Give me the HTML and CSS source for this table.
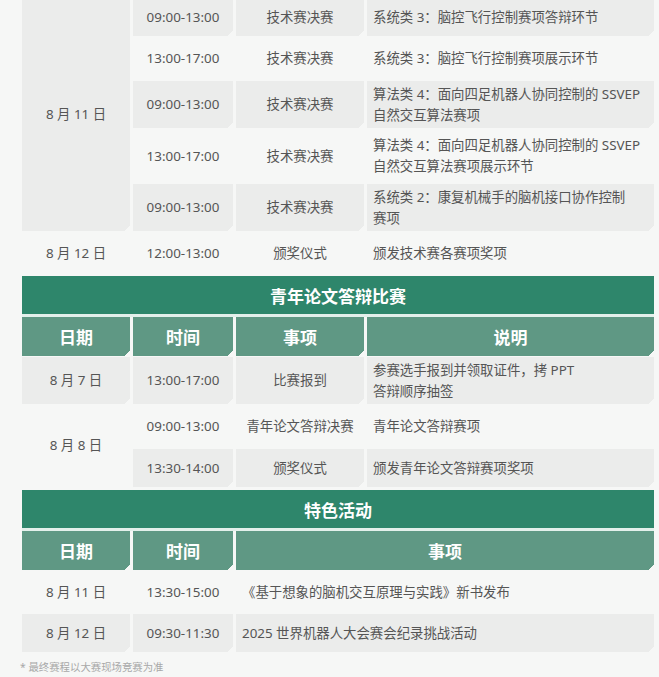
FILE: index.html
```html
<!DOCTYPE html>
<html lang="zh">
<head>
<meta charset="utf-8">
<title>赛程安排</title>
<link rel="stylesheet" href="styles.css">
</head>
<body>
<div class="page">
  <table class="sched first">
    <colgroup><col class="c-date"><col class="c-time"><col class="c-item"><col class="c-desc"></colgroup>
    <tbody>
      <tr class="g1">
        <td class="gray" rowspan="5">8 月 11 日</td>
        <td class="gray">09:00-13:00</td>
        <td class="gray">技术赛决赛</td>
        <td class="gray desc">系统类 3：脑控飞行控制赛项答辩环节</td>
      </tr>
      <tr class="w1">
        <td>13:00-17:00</td>
        <td>技术赛决赛</td>
        <td class="desc">系统类 3：脑控飞行控制赛项展示环节</td>
      </tr>
      <tr class="g2">
        <td class="gray">09:00-13:00</td>
        <td class="gray">技术赛决赛</td>
        <td class="gray desc">算法类 4：面向四足机器人协同控制的 SSVEP<br>自然交互算法赛项</td>
      </tr>
      <tr class="w2">
        <td>13:00-17:00</td>
        <td>技术赛决赛</td>
        <td class="desc">算法类 4：面向四足机器人协同控制的 SSVEP<br>自然交互算法赛项展示环节</td>
      </tr>
      <tr class="g2">
        <td class="gray">09:00-13:00</td>
        <td class="gray">技术赛决赛</td>
        <td class="gray desc">系统类 2：康复机械手的脑机接口协作控制<br>赛项</td>
      </tr>
      <tr class="w1">
        <td>8 月 12 日</td>
        <td>12:00-13:00</td>
        <td>颁奖仪式</td>
        <td class="desc">颁发技术赛各赛项奖项</td>
      </tr>
    </tbody>
  </table>

  <table class="sched">
    <colgroup><col class="c-date"><col class="c-time"><col class="c-item"><col class="c-desc"></colgroup>
    <thead>
      <tr><th class="title" colspan="4">青年论文答辩比赛</th></tr>
      <tr class="head">
        <th>日期</th><th>时间</th><th>事项</th><th>说明</th>
      </tr>
    </thead>
    <tbody>
      <tr class="g2">
        <td class="gray">8 月 7 日</td>
        <td class="gray">13:00-17:00</td>
        <td class="gray">比赛报到</td>
        <td class="gray desc">参赛选手报到并领取证件，拷 PPT<br>答辩顺序抽签</td>
      </tr>
      <tr class="w1">
        <td rowspan="2">8 月 8 日</td>
        <td>09:00-13:00</td>
        <td>青年论文答辩决赛</td>
        <td class="desc">青年论文答辩赛项</td>
      </tr>
      <tr class="g1">
        <td class="gray">13:30-14:00</td>
        <td class="gray">颁奖仪式</td>
        <td class="gray desc">颁发青年论文答辩赛项奖项</td>
      </tr>
    </tbody>
  </table>

  <table class="sched spaced">
    <colgroup><col class="c-date"><col class="c-time"><col class="c-item"><col class="c-desc"></colgroup>
    <thead>
      <tr><th class="title" colspan="4">特色活动</th></tr>
      <tr class="head">
        <th>日期</th><th>时间</th><th colspan="2">事项</th>
      </tr>
    </thead>
    <tbody>
      <tr class="w1 short">
        <td>8 月 11 日</td>
        <td>13:30-15:00</td>
        <td class="desc" colspan="2">《基于想象的脑机交互原理与实践》新书发布</td>
      </tr>
      <tr class="g1">
        <td class="gray">8 月 12 日</td>
        <td class="gray">09:30-11:30</td>
        <td class="gray desc" colspan="2">2025 世界机器人大会赛会纪录挑战活动</td>
      </tr>
    </tbody>
  </table>

  <p class="note">* 最终赛程以大赛现场竞赛为准</p>
</div>
</body>
</html>
```

FILE: styles.css
```css
html, body {
  margin: 0;
  padding: 0;
  background: #f6f7f6;
}

body {
  font-family: "Noto Sans", "Noto Sans CJK SC", sans-serif;
  font-size: 13.4px;
  color: #555555;
}

.page {
  width: 659px;
  height: 677px;
  overflow: hidden;
}

.sched {
  width: 638px;
  margin-left: 19px;
  table-layout: fixed;
  border-collapse: separate;
  border-spacing: 3px 0;
  margin-top: 0;
}

.sched.first {
  margin-top: -2px;
}

.sched.spaced {
  margin-top: 3px;
}

.c-date { width: 108px; }
.c-time { width: 100px; }
.c-item { width: 128px; }
.c-desc { width: 287px; }

td {
  padding: 0;
  text-align: center;
  vertical-align: middle;
  line-height: 21px;
  white-space: nowrap;
}

td.desc {
  text-align: left;
  padding-left: 6px;
}

td.gray {
  background: linear-gradient(135deg, #ebeceb calc(100% - 4px), #f6f7f6 calc(100% - 4px));
}

tr.g1 > td { height: 38px; }
tr.g2 > td { height: 47px; }
tr.w1 > td { height: 45px; }
tr.w2 > td { height: 56px; }
tr.w1.short > td { height: 43px; }

th {
  padding: 0;
  color: #ffffff;
  font-weight: 700;
  font-size: 17px;
  text-align: center;
  vertical-align: middle;
}

th.title {
  height: 38px;
  background: #2e866b;
  background-clip: padding-box;
  border-bottom: 3px solid #e3f0eb;
}

tr.head > th {
  height: 39px;
  background: linear-gradient(135deg, #5f9884 calc(100% - 4px), #f6f7f6 calc(100% - 4px));
  background-clip: padding-box;
  border-bottom: 1px solid transparent;
}

.note {
  margin: 8px 0 0 20px;
  font-size: 10.4px;
  line-height: 14px;
  color: #a8a8a8;
}
```
